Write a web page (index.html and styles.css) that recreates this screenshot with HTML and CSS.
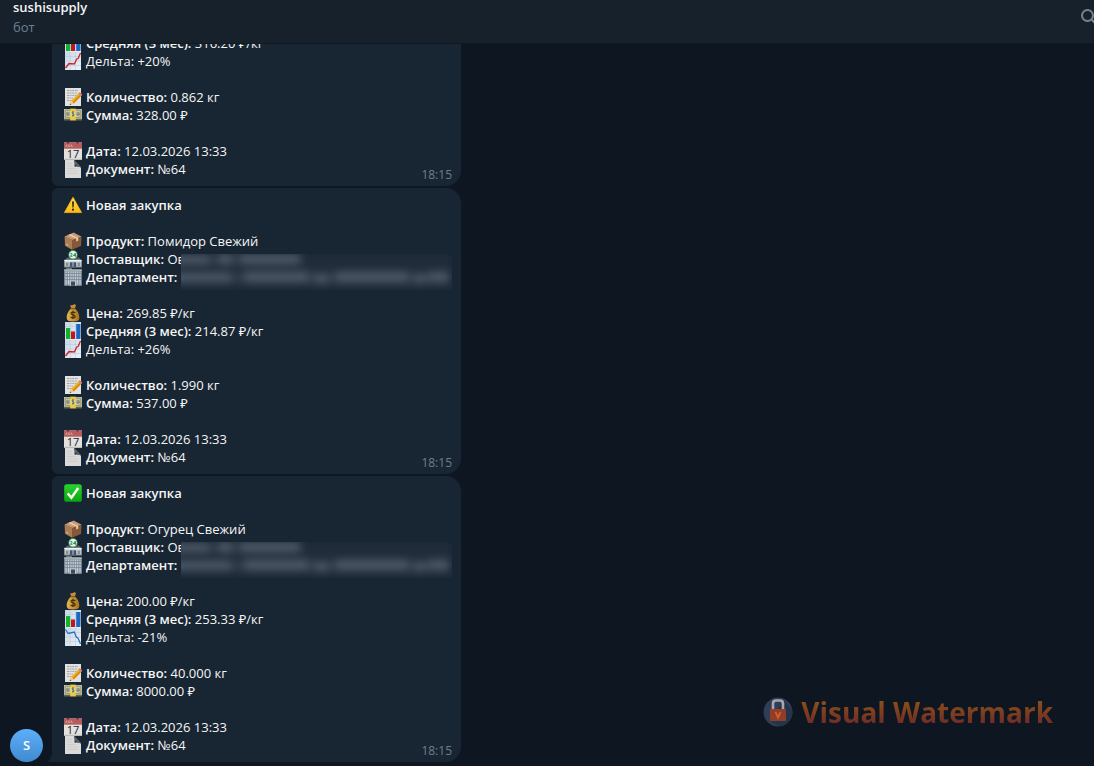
FILE: index.html
```
<!DOCTYPE html>
<html lang="ru">
<head>
    <meta charset="UTF-8">
    <meta name="viewport" content="width=device-width, initial-scale=1.0">
    <title>sushisupply</title>
    <link rel="stylesheet" href="styles.css">
</head>
<body>
    <!-- Emoji set -->
    <svg class="sprite" aria-hidden="true">
        <defs>
            <linearGradient id="gWarn" x1="0" y1="0" x2="0" y2="1"><stop offset="0" stop-color="#ffe04a"/><stop offset="1" stop-color="#fbb914"/></linearGradient>
            <linearGradient id="gCheck" x1="0" y1="0" x2="0" y2="1"><stop offset="0" stop-color="#2bd32f"/><stop offset="1" stop-color="#06a80c"/></linearGradient>
            <linearGradient id="gPaper" x1="0" y1="0" x2="1" y2="1"><stop offset="0" stop-color="#c6d6e6"/><stop offset="1" stop-color="#f0f3f6"/></linearGradient>
            <linearGradient id="gBag" x1="0" y1="0" x2="1" y2="0"><stop offset="0" stop-color="#e2b850"/><stop offset="1" stop-color="#a8721f"/></linearGradient>
        </defs>
        <symbol id="warning" viewBox="0 0 18 18">
            <path d="M9 1.200 17.600 16.600H.400z" fill="url(#gWarn)" stroke="#f3b41b" stroke-width=".8" stroke-linejoin="round"/>
            <path d="M8 5.600h2l-.4 6H8.400z" fill="#2b2418"/><circle cx="9" cy="13.700" r="1.100" fill="#2b2418"/>
        </symbol>
        <symbol id="check" viewBox="0 0 18 18">
            <rect x=".2" y=".2" width="17.600" height="17.600" rx="2.600" fill="url(#gCheck)"/>
            <path d="M3.700 9.400 7.400 13.700 14.200 4" fill="none" stroke="#fff" stroke-width="2.400"/>
        </symbol>
        <symbol id="box" viewBox="0 0 18 18">
            <path d="M.6 4.500 8 8v9.800L1 13.800z" fill="#ad7d56"/><path d="M8 8l9.600-3.300-.6 9.300-9 3.800z" fill="#855839"/>
            <path d="M.6 4.500 9.600.400l8 4.300L8 8z" fill="#c99a73"/><path d="M4.200 2.900 12.300 6.500v3l1.900-.7V5.900L6.300 2z" fill="#e8cdad"/>
            <path d="M2.200 11.500l2 1.200v1.400l-2-1.200z" fill="#d9b58f"/>
        </symbol>
        <symbol id="store" viewBox="0 0 18 18">
            <path d="M1 10.200 3 7.400h12l2 2.800z" fill="#53645f"/><path d="M.4 10h17.200v7.200H.4z" fill="#c9d3d6"/>
            <path d="M.4 9.800h17.200v1.500H.4z" fill="#ecf0f2"/><path d="M5.800 12.300h6.400v4.900H5.800z" fill="#3f536c"/><path d="M8.500 12.300h1v4.900h-1z" fill="#bfcbd5"/>
            <path d="M1.800 12.500h2.700V16H1.800zM13.500 12.500h2.700V16h-2.700z" fill="#8193a3"/><path d="M0 16.600h18v1H0z" fill="#606f62"/>
            <circle cx="9" cy="4.800" r="4.700" fill="#3d9260"/><circle cx="9" cy="4.800" r="3.800" fill="#e9f5ec"/>
            <path d="M6.300 3.700q1.800-1 1.800.5L6.500 6.300h2M11.300 6.800V3.200L9.400 5.600h2.700" fill="none" stroke="#257244" stroke-width=".9"/>
        </symbol>
        <symbol id="office" viewBox="0 0 18 18">
            <path d="M2 0h6v2H2z" fill="#6d7882"/><path d="M.2 1.400h17.600v16.400H.2z" fill="#8b99a6"/><path d="M.2 1.400h17.600v1.400H.2z" fill="#adb7bf"/>
            <path d="M2 3.500v13M4.500 3.500v13M7 3.500V12M9.200 3.500V12M11.400 3.500V12M13.600 3.500v13M16 3.500v13" stroke="#c8d1d8" stroke-width="1"/>
            <path d="M.5 5.500h17M.5 8.500h17M.5 11.500h17" stroke="#6b7a89" stroke-width=".6"/>
            <path d="M5.700 12.300h6.600v5.500H5.700z" fill="#c0c8ce"/><path d="M7 13.500h4v4.300H7z" fill="#3d4b5a"/>
        </symbol>
        <symbol id="money" viewBox="0 0 18 18">
            <path d="M6 .8q1.400 1 3 0t3 .2l-1.100 3.600H7.200z" fill="#c38e35"/><path d="M7 4.400h4c2.600 2.400 4.800 6 4.200 10.200-.3 2-1.700 2.900-6.200 2.900s-5.900-.9-6.200-2.900C2.200 10.400 4.400 6.800 7 4.400z" fill="url(#gBag)"/>
            <path d="M6.700 4.700h4.600" stroke="#7c541d" stroke-width="1.200"/>
            <path d="M11.300 8.900C10.200 7.700 6.900 7.800 7 9.500c.1 1.700 4.200 1 4.200 2.900 0 1.800-3.400 1.900-4.500.6M9 6.800v8.200" fill="none" stroke="#47310f" stroke-width="1.200"/>
        </symbol>
        <symbol id="bars" viewBox="0 0 18 18">
            <path d="M1 0h16v18H1z" fill="url(#gPaper)"/><path d="M1 4.500h16M1 9h16M1 13.500h16M6 0v18M11.500 0v18" stroke="#b3c6d6" stroke-width=".5"/>
            <path d="M2 6h4.200v11H2z" fill="#14b12a"/><path d="M7 9.500h4V17H7z" fill="#c41421"/><path d="M12.200 2h4.300v15h-4.300z" fill="#1a66c4"/>
        </symbol>
        <symbol id="up" viewBox="0 0 18 18">
            <path d="M1 0h16v18H1z" fill="url(#gPaper)"/><path d="M1 4.500h16M1 9h16M1 13.500h16M6 0v18M11.500 0v18" stroke="#b3c6d6" stroke-width=".5"/>
            <path d="M1.500 16 5 11.500l5.500.3L12.700 7l1.500-.5L16.500 1" fill="none" stroke="#ce1f2a" stroke-width="1.300"/>
        </symbol>
        <symbol id="down" viewBox="0 0 18 18">
            <path d="M1 0h16v18H1z" fill="url(#gPaper)"/><path d="M1 4.500h16M1 9h16M1 13.500h16M6 0v18M11.500 0v18" stroke="#b3c6d6" stroke-width=".5"/>
            <path d="M1.500 1.500 4.200 5.500l6-1.500 2.300 5.300 1.500.7 2.500 6" fill="none" stroke="#2674c8" stroke-width="1.300"/>
        </symbol>
        <symbol id="memo" viewBox="0 0 18 18">
            <path d="M1 0h16v18H1z" fill="#e0e1e0"/>
            <path d="M3 2.500h11M3 5h10M3 7.500h11M3 10h6M3 12.500h5" stroke="#9c9d9e" stroke-width=".9" stroke-dasharray="2 .6"/>
            <path d="M7 12.700 14.200 5.600l2.700 2.700-7.200 7.200-3.900 1.300z" fill="#f2b42c"/><path d="M8.500 14 15.600 7l1.300 1.300-7.200 7.200z" fill="#d58a16"/>
            <path d="M14.200 5.600l1.100-1q1-.5 2 .6t.7 2l-1.100 1.100z" fill="#dc7d76"/><path d="M7 12.700l2.700 2.800-3.900 1.300z" fill="#ecd0a2"/><path d="M6.200 15.500l1 1-1.400.4z" fill="#333"/>
        </symbol>
        <symbol id="cash" viewBox="0 0 18 18">
            <path d="M0 4h18v10.500H0z" fill="#66654c"/><path d="M0 3h18v9.800H0z" fill="#c6c5a8"/>
            <path d="M1.200 4.200h15.600v7.400H1.200z" fill="none" stroke="#898c70" stroke-width=".8"/>
            <circle cx="3.800" cy="8" r="2" fill="#8f9272"/><circle cx="14.200" cy="8" r="2" fill="#8f9272"/>
            <path d="M6.200 2.600h5.600v11.800H6.200z" fill="#ecca40"/><ellipse cx="9" cy="7.900" rx="2.300" ry="3" fill="#e8e7cb"/>
            <path d="M10.300 6.500C9.300 5.700 7.600 6 7.800 7c.2.900 2.500.6 2.500 1.800 0 1-1.900 1.200-2.700.4M9 5v5.800" fill="none" stroke="#565637" stroke-width=".8"/>
        </symbol>
        <symbol id="calendar" viewBox="0 0 18 18">
            <path d="M0 .5h18v17.300H0z" fill="#e2e1df"/><path d="M0 .5h18v6.200H0z" fill="#b65c5c"/>
            <path d="M1.500 4.500h1v-2M4.300 2.500v2h1.500v-2M7.500 2.500v2h1.300" fill="none" stroke="#e0aaa7" stroke-width=".7"/>
            <path d="M4 0v1.500M13.500 0v1.500" stroke="#433" stroke-width="1.600"/><path d="M0 16.800h18v1H0z" fill="#bdbbb8"/>
            <text x="9" y="16" text-anchor="middle" font-family="Open Sans, sans-serif" font-size="11" fill="#222">17</text>
        </symbol>
        <symbol id="page" viewBox="0 0 18 18">
            <path d="M1 0h9l7 7.500V18H1z" fill="#dadada"/><path d="M3 3.500h5M3 6h5M3 8.500h9M3 11h11M3 13.500h11" stroke="#c8c9ca" stroke-width=".8"/>
            <path d="M10 0q1.200 3 .4 6.700 3.500-.8 6.600.8z" fill="#2f373d"/><path d="M10 0 17 7.500 11.500 5z" fill="#5c6265"/>
        </symbol>
        <!-- Blurred supplier and department -->
        <symbol id="hidden" viewBox="-12 0 284 36" preserveAspectRatio="none">
            <rect x="-12" width="284" height="36" fill="#5a6672" opacity=".12"/>
            <g fill="#707b86" opacity=".6">
                <rect x="-12" y="1" width="42" height="9"/><rect x="36" y="0" width="17" height="10"/><rect x="58" y="0" width="62" height="10"/>
                <rect x="-12" y="19" width="63" height="9"/><rect x="54" y="22" width="6" height="4"/><rect x="63" y="18" width="66" height="10"/><rect x="133" y="20" width="16" height="9"/>
                <rect x="154" y="18" width="75" height="10"/><rect x="233" y="20" width="13" height="9"/><rect x="248" y="18" width="21" height="10"/>
            </g>
        </symbol>
    </svg>

    <header class="topbar">
        <div class="peer">
            <h1 class="peer-name">sushisupply</h1>
            <p class="peer-status">бот</p>
        </div>
        <button class="search" aria-label="Поиск">
            <svg viewBox="0 0 18 18"><circle cx="7.500" cy="7.500" r="5.500"/><path d="M11.500 11.500 16 16"/></svg>
        </button>
    </header>

    <main class="chat">
        <div class="group">
            <div class="avatar">S</div>
            <div class="messages">
                <article class="bubble">
                    <div class="block">
                        <p class="line"><svg><use href="#bars"/></svg><span><b>Средняя (3 мес):</b> 316.20 ₽/кг</span></p>
                        <p class="line"><svg><use href="#up"/></svg><span>Дельта: +20%</span></p>
                    </div>
                    <div class="block">
                        <p class="line"><svg><use href="#memo"/></svg><span><b>Количество:</b> 0.862 кг</span></p>
                        <p class="line"><svg><use href="#cash"/></svg><span><b>Сумма:</b> 328.00 ₽</span></p>
                    </div>
                    <div class="block">
                        <p class="line"><svg><use href="#calendar"/></svg><span><b>Дата:</b> 12.03.2026 13:33</span></p>
                        <p class="line"><svg><use href="#page"/></svg><span><b>Документ:</b> №64</span></p>
                    </div>
                    <time class="time">18:15</time>
                </article>

                <article class="bubble">
                    <div class="block">
                        <p class="line"><svg><use href="#warning"/></svg><b>Новая закупка</b></p>
                    </div>
                    <div class="block">
                        <p class="line"><svg><use href="#box"/></svg><span><b>Продукт:</b> Помидор Свежий</span></p>
                        <p class="line"><svg><use href="#store"/></svg><span><b>Поставщик:</b> Ов</span></p>
                        <p class="line"><svg><use href="#office"/></svg><span><b>Департамент:</b></span></p>
                        <div class="blurred"><svg><use href="#hidden"/></svg></div>
                    </div>
                    <div class="block">
                        <p class="line"><svg><use href="#money"/></svg><span><b>Цена:</b> 269.85 ₽/кг</span></p>
                        <p class="line"><svg><use href="#bars"/></svg><span><b>Средняя (3 мес):</b> 214.87 ₽/кг</span></p>
                        <p class="line"><svg><use href="#up"/></svg><span>Дельта: +26%</span></p>
                    </div>
                    <div class="block">
                        <p class="line"><svg><use href="#memo"/></svg><span><b>Количество:</b> 1.990 кг</span></p>
                        <p class="line"><svg><use href="#cash"/></svg><span><b>Сумма:</b> 537.00 ₽</span></p>
                    </div>
                    <div class="block">
                        <p class="line"><svg><use href="#calendar"/></svg><span><b>Дата:</b> 12.03.2026 13:33</span></p>
                        <p class="line"><svg><use href="#page"/></svg><span><b>Документ:</b> №64</span></p>
                    </div>
                    <time class="time">18:15</time>
                </article>

                <article class="bubble last">
                    <div class="block">
                        <p class="line"><svg><use href="#check"/></svg><b>Новая закупка</b></p>
                    </div>
                    <div class="block">
                        <p class="line"><svg><use href="#box"/></svg><span><b>Продукт:</b> Огурец Свежий</span></p>
                        <p class="line"><svg><use href="#store"/></svg><span><b>Поставщик:</b> Ов</span></p>
                        <p class="line"><svg><use href="#office"/></svg><span><b>Департамент:</b></span></p>
                        <div class="blurred"><svg><use href="#hidden"/></svg></div>
                    </div>
                    <div class="block">
                        <p class="line"><svg><use href="#money"/></svg><span><b>Цена:</b> 200.00 ₽/кг</span></p>
                        <p class="line"><svg><use href="#bars"/></svg><span><b>Средняя (3 мес):</b> 253.33 ₽/кг</span></p>
                        <p class="line"><svg><use href="#down"/></svg><span>Дельта: -21%</span></p>
                    </div>
                    <div class="block">
                        <p class="line"><svg><use href="#memo"/></svg><span><b>Количество:</b> 40.000 кг</span></p>
                        <p class="line"><svg><use href="#cash"/></svg><span><b>Сумма:</b> 8000.00 ₽</span></p>
                    </div>
                    <div class="block">
                        <p class="line"><svg><use href="#calendar"/></svg><span><b>Дата:</b> 12.03.2026 13:33</span></p>
                        <p class="line"><svg><use href="#page"/></svg><span><b>Документ:</b> №64</span></p>
                    </div>
                    <time class="time">18:15</time>
                </article>
            </div>
        </div>
    </main>

    <div class="watermark">
        <svg viewBox="0 0 30 30" aria-hidden="true">
            <circle cx="15" cy="15" r="14.500" fill="#2f3d55"/>
            <path d="M21 3 29.400 14A14.500 14.500 0 0 1 17 29.400L7 24z" fill="#21364a"/>
            <path d="M10 13V6.500Q10 3.500 13 3.500h4q3 0 3 3V13" fill="none" stroke="#a5a9af" stroke-width="2.600"/>
            <rect x="7" y="12" width="16" height="12" rx="1" fill="#943c2b"/>
            <path d="M12.500 15 15 20.500 17.500 15" fill="none" stroke="#c66b1b" stroke-width="1.800"/>
        </svg>
        <span>Visual Watermark</span>
    </div>
</body>
</html>
```
FILE: styles.css
```
* {
    box-sizing: border-box;
}

body {
    margin: 0;
    height: 100vh;
    display: flex;
    flex-direction: column;
    overflow: hidden;
    position: relative;
    background: #0e1621;
    color: #f5f5f5;
    font-family: "Open Sans", "Noto Sans", sans-serif;
    font-size: 13px;
    line-height: 18px;
}

h1, p {
    margin: 0;
}

b {
    font-weight: 600;
}

.sprite {
    position: absolute;
    width: 0;
    height: 0;
}

/* Header */
.topbar {
    display: flex;
    justify-content: space-between;
    flex-shrink: 0;
    padding: 0 0 7px 13px;
    background: #17212b;
    border-bottom: 1px solid #101924;
}

.peer-name {
    font-size: 13px;
    font-weight: 600;
    line-height: 14px;
}

.peer-status {
    margin-top: 4px;
    color: #6d7f8f;
}

.search {
    width: 18px;
    height: 18px;
    margin: 8px -4px 0 0;
    padding: 0;
    border: none;
    background: none;
    cursor: pointer;
}

.search svg {
    display: block;
    width: 18px;
    height: 18px;
    fill: none;
    stroke: #768491;
    stroke-width: 2;
}

/* Conversation, pinned to the newest message */
.chat {
    flex: 1;
    min-height: 0;
    display: flex;
    flex-direction: column;
    justify-content: flex-end;
    overflow: hidden;
    padding: 0 10px 4px;
}

.group {
    display: flex;
    align-items: flex-end;
    gap: 9px;
}

.avatar {
    width: 33px;
    height: 33px;
    flex-shrink: 0;
    border-radius: 50%;
    background: linear-gradient(#5caffa, #408acf);
    color: #fff;
    font-weight: 600;
    line-height: 33px;
    text-align: center;
}

.messages {
    flex: 1;
    max-width: 409px;
    display: flex;
    flex-direction: column;
    gap: 2px;
}

.bubble {
    position: relative;
    padding: 8px 9px 2px 12px;
    background: #182533;
    border-radius: 6px 15px 15px 6px;
}

.bubble.last {
    border-bottom-left-radius: 0;
}

.bubble.last::before {
    content: '';
    position: absolute;
    left: -6px;
    bottom: 0;
    width: 6px;
    height: 10px;
    background: radial-gradient(ellipse 6px 10px at 0 0, transparent 95%, #182533 100%);
}

.block {
    position: relative;
    margin-bottom: 18px;
}

.block:nth-last-of-type(1) {
    margin-bottom: 0;
}

.line {
    display: flex;
    gap: 4px;
    white-space: nowrap;
}

.line svg {
    width: 18px;
    height: 18px;
    flex-shrink: 0;
}

.blurred {
    position: absolute;
    top: 22px;
    left: 117px;
    right: 0;
    height: 36px;
    overflow: hidden;
    background: #182533;
}

.blurred svg {
    display: block;
    width: calc(100% + 12px);
    height: 100%;
    margin-left: -12px;
    filter: blur(4px);
}

.time {
    display: block;
    margin-top: -12px;
    color: #6d7f8f;
    font-size: 12px;
    text-align: right;
}

/* Watermark over the chat */
.watermark {
    position: absolute;
    right: 41px;
    bottom: 33px;
    display: flex;
    align-items: center;
    gap: 8px;
    font-size: 28px;
    font-weight: 700;
    line-height: 42px;
}

.watermark svg {
    width: 30px;
    height: 30px;
}

.watermark span {
    background: linear-gradient(#8c5218 20%, #6f2b27 80%);
    -webkit-background-clip: text;
    background-clip: text;
    color: transparent;
}
```
